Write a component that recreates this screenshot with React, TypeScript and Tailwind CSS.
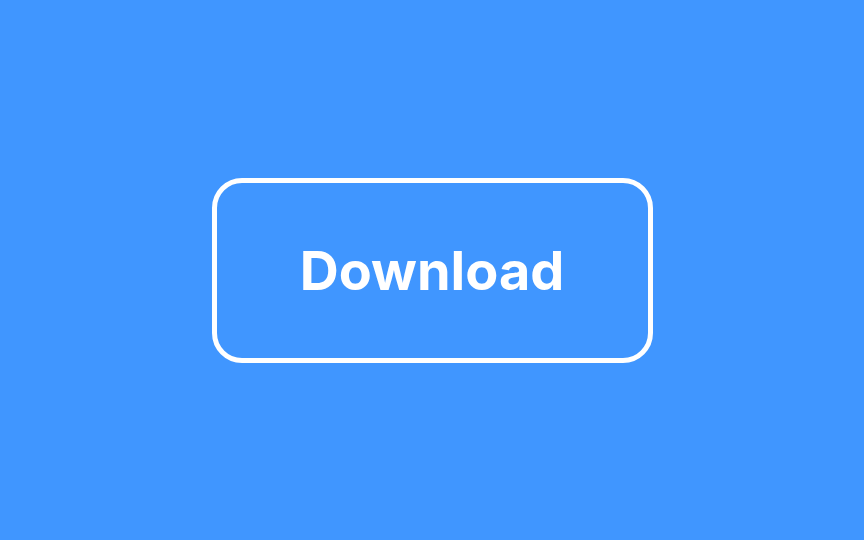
export default function App() {
  return (
    <div className="w-[864px] h-[540px] bg-[#4096ff] flex items-center justify-center" style={{ fontFamily: "Inter, 'Liberation Sans', sans-serif" }}>
      <button className="w-[441px] h-[185px] rounded-[30px] border-[5px] border-white text-white text-[54px] font-bold flex items-center justify-center">
        Download
      </button>
    </div>
  );
}
